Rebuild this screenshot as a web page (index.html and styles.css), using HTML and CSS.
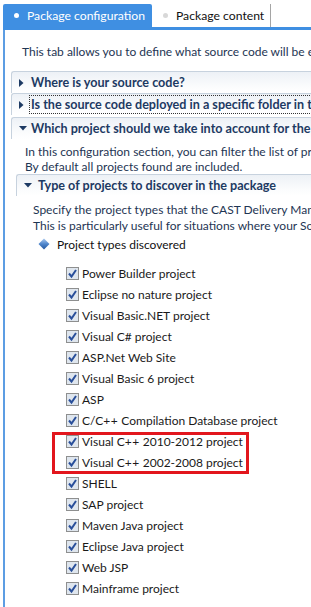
FILE: index.html
```html
<!DOCTYPE html>
<html lang="en">
<head>
    <meta charset="UTF-8">
    <meta name="viewport" content="width=device-width, initial-scale=1.0">
    <title>Package configuration</title>
    <link rel="stylesheet" href="styles.css">
</head>
<body>
    <div class="tabs">
        <div class="tab active"><span class="dot"></span><span>Package configuration</span></div>
        <div class="tab"><span class="dot"></span><span>Package content</span></div>
    </div>

    <div class="panel">
        <p class="intro">This tab allows you to define what source code will be extracted and packaged.</p>

        <div class="section">
            <div class="section-head">
                <span class="twisty"><svg width="5" height="8" viewBox="0 0 5 8"><path d="M0 0 L4.5 4 L0 8 Z" fill="#1d3a63"/></svg></span>
                <span class="head-text">Where is your source code?</span>
            </div>
        </div>

        <div class="section">
            <div class="section-head">
                <span class="twisty"><svg width="5" height="8" viewBox="0 0 5 8"><path d="M0 0 L4.5 4 L0 8 Z" fill="#1d3a63"/></svg></span>
                <span class="head-text focused">Is the source code deployed in a specific folder in the package?</span>
            </div>
        </div>

        <div class="section open">
            <div class="section-head">
                <span class="twisty"><svg width="8" height="5" viewBox="0 0 8 5"><path d="M0 0 L8 0 L4 4.5 Z" fill="#1d3a63"/></svg></span>
                <span class="head-text">Which project should we take into account for the package?</span>
            </div>
            <div class="section-body">
                <p class="desc">In this configuration section, you can filter the list of projects to be packaged.<br>By default all projects found are included.</p>

                <div class="section sub open">
                    <div class="section-head">
                        <span class="twisty"><svg width="8" height="5" viewBox="0 0 8 5"><path d="M0 0 L8 0 L4 4.5 Z" fill="#1d3a63"/></svg></span>
                        <span class="head-text">Type of projects to discover in the package</span>
                    </div>
                    <div class="sub-body">
                        <p class="desc">Specify the project types that the CAST Delivery Manager Tool should discover.<br>This is particularly useful for situations where your Source code contains several types.</p>

                        <div class="list-title">
                            <svg width="12" height="12" viewBox="0 0 12 12">
                                <defs>
                                    <linearGradient id="dg" x1="0" y1="0" x2="0" y2="1">
                                        <stop offset="0" stop-color="#a9c8ee"/>
                                        <stop offset="0.5" stop-color="#4f86cc"/>
                                        <stop offset="1" stop-color="#23569e"/>
                                    </linearGradient>
                                </defs>
                                <path d="M6 0.5 L11.5 6 L6 11.5 L0.5 6 Z" fill="url(#dg)"/>
                            </svg>
                            <span>Project types discovered</span>
                        </div>

                        <ul class="checklist">
                            <li><span class="check"></span><span>Power Builder project</span></li>
                            <li><span class="check"></span><span>Eclipse no nature project</span></li>
                            <li><span class="check"></span><span>Visual Basic.NET project</span></li>
                            <li><span class="check"></span><span>Visual C# project</span></li>
                            <li><span class="check"></span><span>ASP.Net Web Site</span></li>
                            <li><span class="check"></span><span>Visual Basic 6 project</span></li>
                            <li><span class="check"></span><span>ASP</span></li>
                            <li><span class="check"></span><span>C/C<span class="pp">++</span> Compilation Database project</span></li>
                            <li class="highlight">
                                <ul class="checklist inner">
                                    <li><span class="check"></span><span>Visual C<span class="pp">++</span> 2010-2012 project</span></li>
                                    <li><span class="check"></span><span>Visual C<span class="pp">++</span> 2002-2008 project</span></li>
                                </ul>
                            </li>
                            <li><span class="check"></span><span>SHELL</span></li>
                            <li><span class="check"></span><span>SAP project</span></li>
                            <li><span class="check"></span><span>Maven Java project</span></li>
                            <li><span class="check"></span><span>Eclipse Java project</span></li>
                            <li><span class="check"></span><span>Web JSP</span></li>
                            <li><span class="check"></span><span>Mainframe project</span></li>
                        </ul>
                    </div>
                </div>
            </div>
        </div>
    </div>
</body>
</html>
```

FILE: styles.css
```css
body {
    margin: 0;
    padding: 4px 0 0 3px;
    font-family: Lato, "Open Sans", sans-serif;
    font-size: 12px;
    background-color: #fff;
    color: #1a1a1a;
    overflow: hidden;
}

.tabs {
    display: flex;
    height: 23px;
    border-bottom: 3px solid #3f8fe2;
}

.tab {
    display: flex;
    align-items: center;
    padding: 0 6px 0 11px;
    color: #111;
    font-size: 12.2px;
    border-right: 1px solid #a5a5a5;
    white-space: nowrap;
}

.tab .dot {
    width: 5px;
    height: 5px;
    border-radius: 50%;
    background-color: #d8d8d8;
    margin-right: 8px;
}

.tab.active {
    width: 149px;
    box-sizing: border-box;
    background-color: #3f8fe2;
    color: #fff;
    border-right: none;
    border-radius: 2px 2px 0 0;
}

.tab.active .dot {
    background-color: #fff;
}

.panel {
    box-sizing: border-box;
    border-left: 2px solid #5c9de3;
    height: 577px;
    padding-top: 14px;
    white-space: nowrap;
    overflow: hidden;
}

p {
    margin: 0;
    line-height: 15px;
}

.intro {
    padding-left: 17px;
    color: #1e3553;
    line-height: 16px;
    margin-bottom: 11px;
}

.section {
    margin-left: 6px;
}

.section.open {
    margin-top: 2px;
}

.section-head {
    display: flex;
    align-items: center;
    height: 21px;
    padding-left: 7px;
    border-top: 1px solid #c7d2de;
    border-left: 1px solid #c7d2de;
    border-radius: 3px 0 0 0;
    background: linear-gradient(#edf1f6, #fbfcfd 70%, #fff);
}

.twisty {
    display: flex;
    align-items: center;
    width: 12px;
    flex: none;
}

.head-text {
    font-weight: bold;
    font-size: 12.6px;
    color: #1d3a63;
    line-height: 15px;
}

.head-text.focused {
    outline: 1px dotted #333;
    outline-offset: 1px;
}

.section-body {
    padding: 5px 0 0 14px;
}

.section-body .desc,
.sub-body .desc {
    color: #1e3553;
}

.section.sub {
    margin: 0 0 0 -9px;
}

.sub .twisty {
    width: 14px;
}

.sub-body {
    padding: 6px 0 0 17px;
}

.sub-body .desc {
    line-height: 16px;
}

.list-title {
    display: flex;
    align-items: center;
    gap: 7px;
    margin: 2px 0 0 5px;
    height: 16px;
    color: #111;
}

.checklist {
    list-style: none;
    margin: 11px 0 0 33px;
    padding: 0;
}

.checklist li {
    display: flex;
    align-items: center;
    height: 21px;
}

.checklist.inner {
    margin: 0;
}

.check {
    width: 11px;
    height: 11px;
    border: 1px solid #8e8f8f;
    background: #dfe6ee url("data:image/svg+xml,%3Csvg xmlns='http://www.w3.org/2000/svg' width='11' height='11' viewBox='0 0 11 11'%3E%3Cpath d='M2 5.5 L4.5 8.5 L9 2' fill='none' stroke='%23294f9a' stroke-width='2'/%3E%3C/svg%3E") no-repeat center;
    margin-right: 3px;
    flex: none;
}

.pp {
    letter-spacing: 0.5px;
}

.checklist li.highlight {
    display: block;
    height: auto;
    position: relative;
}

.highlight::after {
    content: "";
    position: absolute;
    left: -14px;
    top: 1px;
    width: 191px;
    bottom: -1px;
    border: 3px solid #e2161d;
}
```
